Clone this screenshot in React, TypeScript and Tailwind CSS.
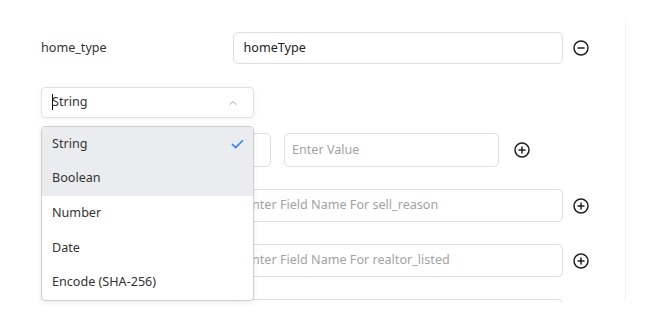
import { Check, ChevronUp } from "lucide-react";

const font = { fontFamily: '"Noto Sans", "Open Sans", sans-serif' };

const CircleIcon = ({ minus }: { minus?: boolean }) => (
    <svg width="16" height="16" viewBox="0 0 16 16" fill="none" stroke="#1f1f1f" strokeWidth="1.5" strokeLinecap="round">
        <circle cx="8" cy="8" r="7" />
        <path d="M5 8h6" />
        {!minus && <path d="M8 5v6" />}
    </svg>
);

const options = ["String", "Boolean", "Number", "Date", "Encode (SHA-256)"];

// label column sits under the open dropdown, so it stays empty here
const FieldRow = ({ field }: { field?: string }) => (
    <div className="flex items-center mt-[22px]">
        <div className="w-[192px]" />
        <div className="w-[330px] h-[33px] border border-[#dedede] rounded-[5px] flex items-center pl-[11px] text-[12.6px] text-[#a3a3a3]">
            {field && `Enter Field Name For ${field}`}
        </div>
        <div className="ml-[10px] flex items-center"><CircleIcon /></div>
    </div>
);

export default function App() {
    return (
        <div className="w-[648px] h-[327px] bg-white relative overflow-hidden" style={font}>
            <div className="mt-[22px] h-[280px] w-[626px] border-r border-[#f1f1f6] overflow-hidden pl-[41px] pt-[10px]">
                <div className="flex items-center">
                    <div className="w-[191.5px] text-[12.6px] text-[#333]">home_type</div>
                    <div className="w-[330.5px] h-[32px] border border-[#dedede] rounded-[5px] flex items-center px-[10px] text-[12.6px] text-[#222]">
                        homeType
                    </div>
                    <div className="ml-[10px] flex items-center"><CircleIcon minus /></div>
                </div>

                <div className="mt-[23px] w-[213px] h-[31px] border border-[#dfe1e6] rounded-[4px] flex items-center justify-between pl-[10px] pr-[14px] text-[12.6px] text-[#333] shadow-[0_1px_6px_rgba(0,0,0,0.05)]">
                    <span className="flex items-center">
                        <span className="w-px h-[16px] bg-[#111] mr-[-1px]" />
                        String
                    </span>
                    <ChevronUp size={12} strokeWidth={1.6} color="#8a8a8a" />
                </div>

                <div className="flex items-center mt-[15px]">
                    <div className="w-[230px] h-[34px] border border-[#dedede] rounded-[5px]" />
                    <div className="ml-[13px] w-[215px] h-[34px] border border-[#dedede] rounded-[5px] flex items-center px-[7px] text-[12.6px] text-[#a3a3a3]">
                        Enter Value
                    </div>
                    <div className="ml-[15px] flex items-center"><CircleIcon /></div>
                </div>

                <FieldRow field="sell_reason" />
                <FieldRow field="realtor_listed" />
                <FieldRow />
            </div>

            <div className="absolute left-[41px] top-[126px] w-[213px] bg-white border border-[#cfcfcf] rounded-[4px] shadow-[0_2px_6px_rgba(0,0,0,0.08)] overflow-hidden">
                {options.map((opt, i) => (
                    <div
                        key={opt}
                        className={`h-[34.6px] flex items-center justify-between pl-[10px] pr-[8px] text-[12.6px] text-[#333] ${i < 2 ? "bg-[#ebecf0]" : ""}`}
                    >
                        {opt}
                        {i === 0 && <Check size={15} strokeWidth={2.8} color="#3b82f6" />}
                    </div>
                ))}
            </div>
        </div>
    );
}
